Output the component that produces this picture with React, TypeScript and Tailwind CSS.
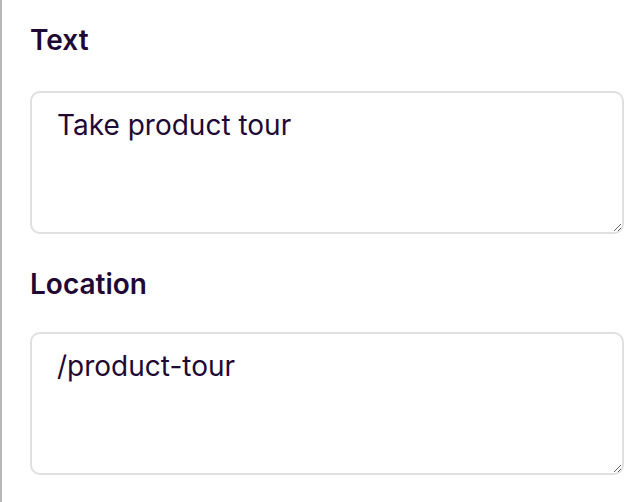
import React from "react";

export default function App() {
  return (
    <div
      className="w-[644px] h-[502px] bg-white border-l-2 border-[#b8b8b8] pl-[28px] pr-[20px] pt-[20px]"
      style={{ fontFamily: "Inter, 'Noto Sans', sans-serif" }}
    >
      <div className="flex flex-col">
        <label className="text-[28px] leading-[40px] font-semibold text-[#1f0934]">Text</label>
        <textarea
          defaultValue="Take product tour"
          className="mt-[31px] h-[143px] w-full rounded-[10px] border-2 border-[#e0e0e3] px-[25px] pt-[12px] pb-[10px] text-[28px] leading-[40px] text-[#1f0934] outline-none"
          style={{ fontFamily: "Inter, 'Noto Sans', sans-serif" }}
        />
        <label className="mt-[30px] text-[28px] leading-[40px] font-semibold text-[#1f0934]">Location</label>
        <textarea
          defaultValue="/product-tour"
          className="mt-[28px] h-[143px] w-full rounded-[10px] border-2 border-[#e0e0e3] px-[25px] pt-[12px] pb-[10px] text-[28px] leading-[40px] text-[#1f0934] outline-none"
          style={{ fontFamily: "Inter, 'Noto Sans', sans-serif" }}
        />
      </div>
    </div>
  );
}
